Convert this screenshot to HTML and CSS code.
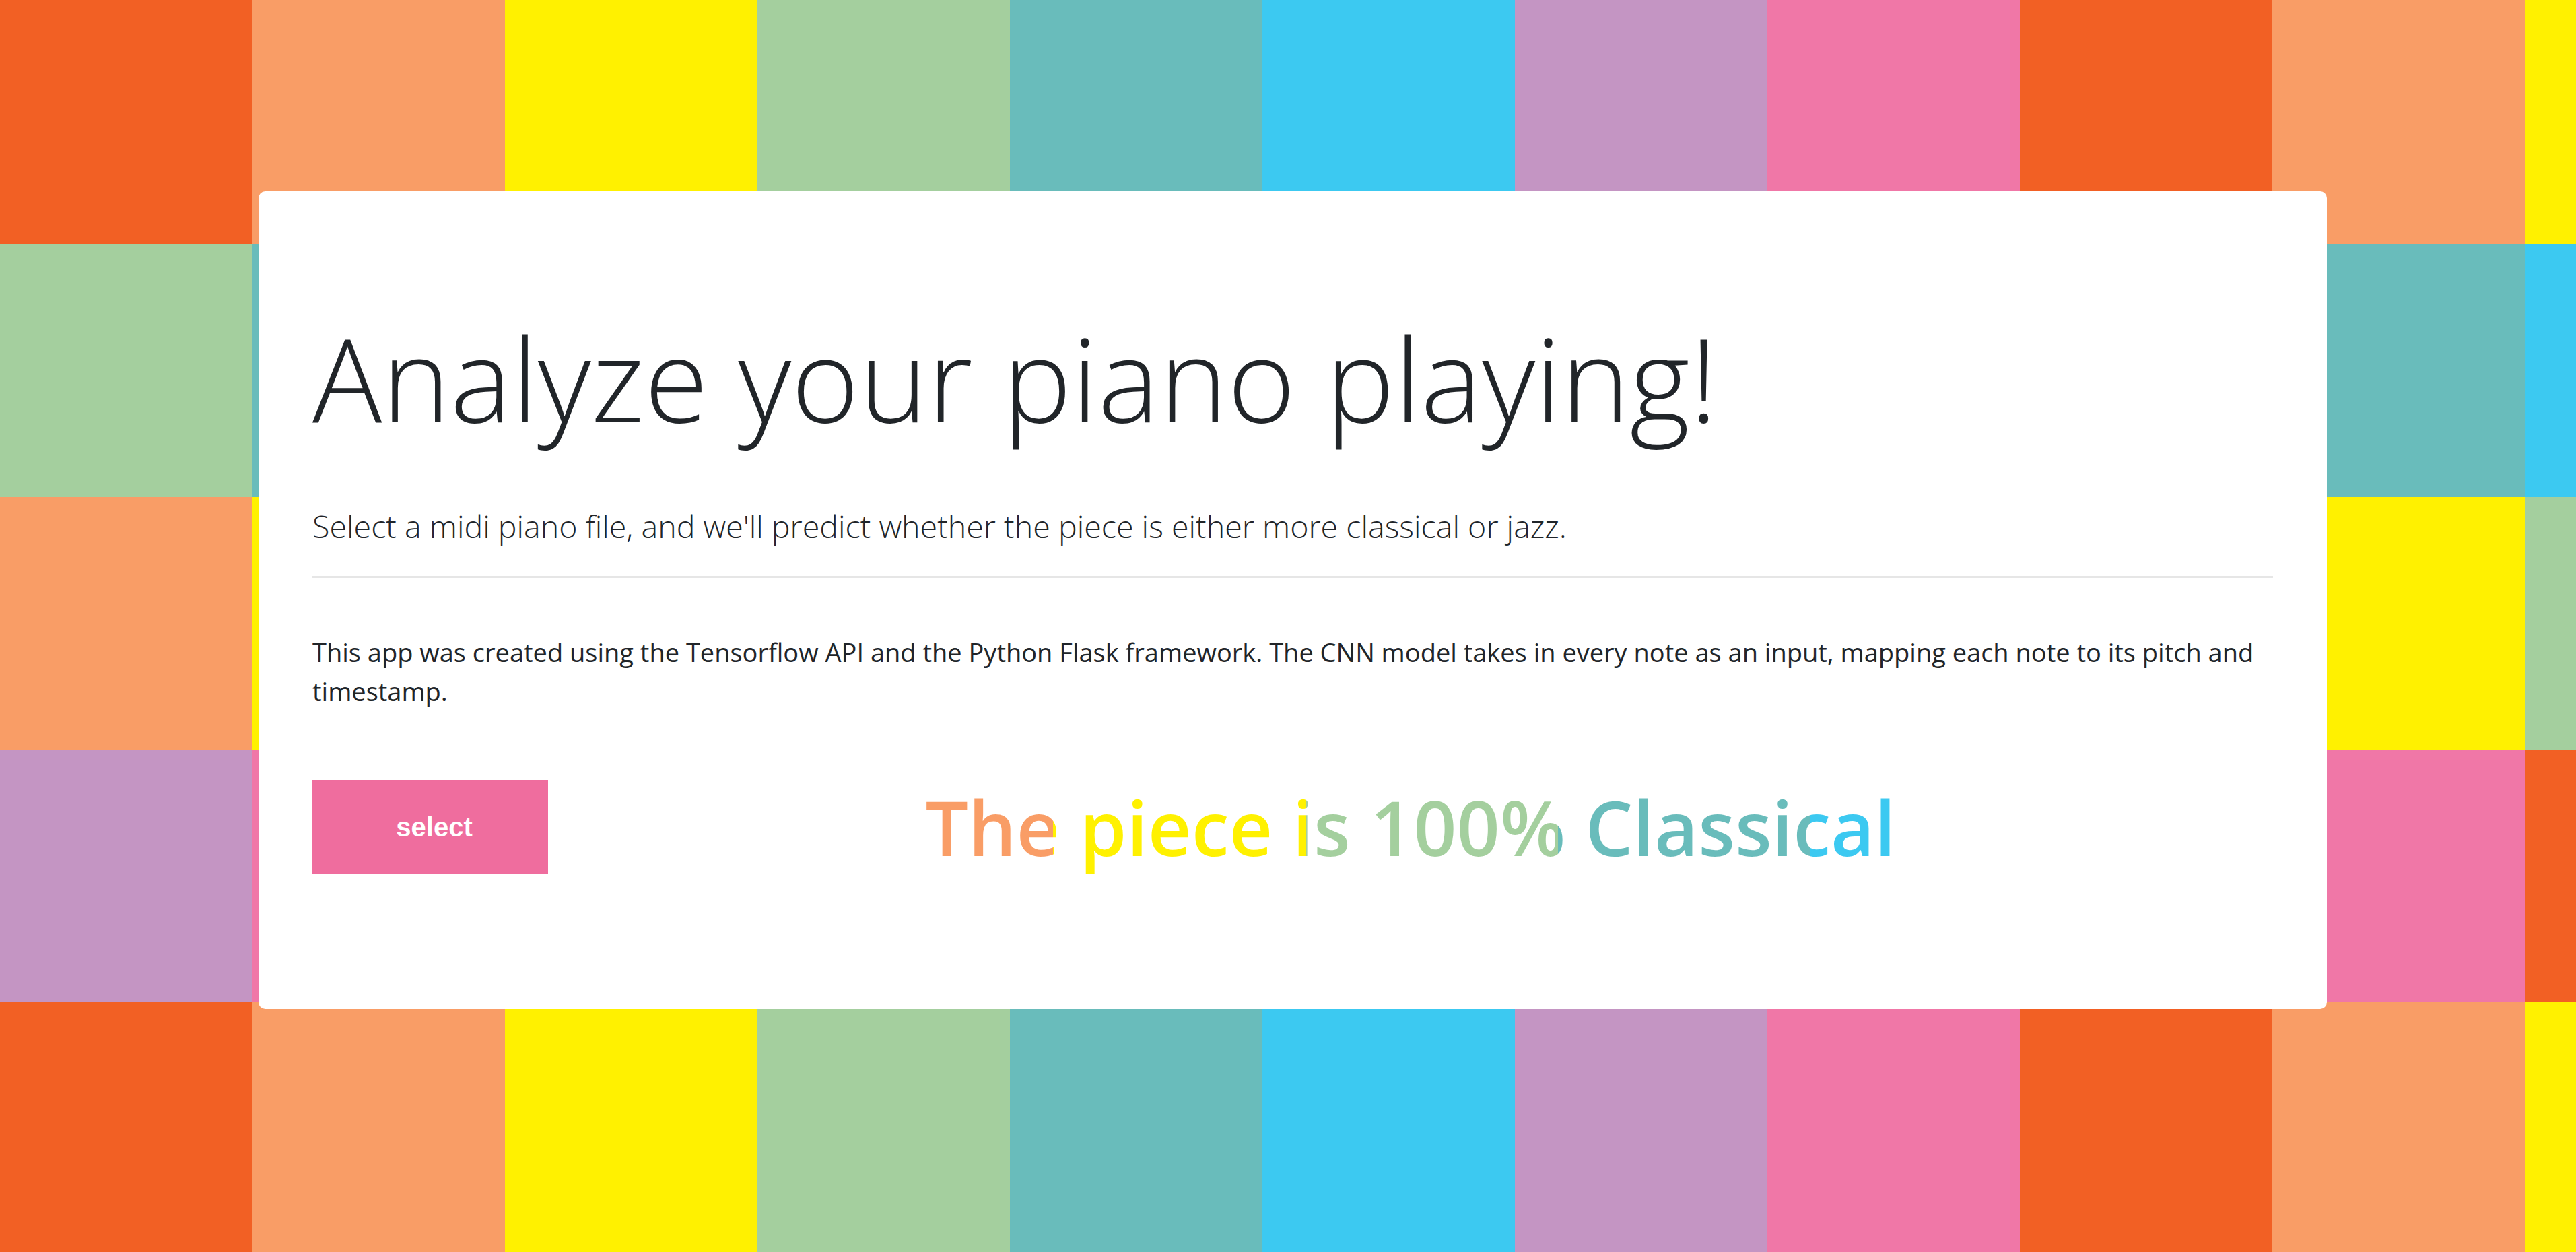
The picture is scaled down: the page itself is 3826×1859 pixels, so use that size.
FILE: index.html
```html
<!DOCTYPE html>
<html lang="en">
<head>
<meta charset="utf-8">
<title>Piano Analyzer</title>
<link rel="stylesheet" href="styles.css">
</head>
<body>
<div class="tiles" aria-hidden="true">
  <div class="t0"></div><div class="t1"></div><div class="t2"></div><div class="t3"></div><div class="t4"></div><div class="t5"></div><div class="t6"></div><div class="t7"></div><div class="t0"></div><div class="t1"></div><div class="t2"></div>
  <div class="t3"></div><div class="t4"></div><div class="t5"></div><div class="t6"></div><div class="t7"></div><div class="t0"></div><div class="t1"></div><div class="t2"></div><div class="t3"></div><div class="t4"></div><div class="t5"></div>
  <div class="t1"></div><div class="t2"></div><div class="t3"></div><div class="t4"></div><div class="t5"></div><div class="t6"></div><div class="t7"></div><div class="t0"></div><div class="t1"></div><div class="t2"></div><div class="t3"></div>
  <div class="t6"></div><div class="t7"></div><div class="t0"></div><div class="t1"></div><div class="t2"></div><div class="t3"></div><div class="t4"></div><div class="t5"></div><div class="t6"></div><div class="t7"></div><div class="t0"></div>
  <div class="t0"></div><div class="t1"></div><div class="t2"></div><div class="t3"></div><div class="t4"></div><div class="t5"></div><div class="t6"></div><div class="t7"></div><div class="t0"></div><div class="t1"></div><div class="t2"></div>
</div>

<main class="card">
  <h1 class="title">Analyze your piano playing!</h1>
  <p class="lead">Select a midi piano file, and we'll predict whether the piece is either more classical or jazz.</p>
  <hr class="rule">
  <p class="info">This app was created using the Tensorflow API and the Python Flask framework. The CNN model takes in every note as an input, mapping each note to its pitch and timestamp.</p>
  <div class="action-row">
    <button class="select-btn" type="button">select</button>
    <div class="result">The piece is 100% Classical</div>
  </div>
</main>
</body>
</html>
```

FILE: styles.css
```css
html, body {
  margin: 0;
  padding: 0;
}

body {
  width: 3826px;
  height: 1859px;
  overflow: hidden;
  font-family: "Open Sans", "Noto Sans", sans-serif;
  color: #212529;
}

.tiles {
  position: fixed;
  top: -12px;
  left: 0;
  z-index: -1;
  display: grid;
  grid-template-columns: repeat(11, 375px);
  grid-auto-rows: 375px;
}

.t0 { background: #f26024; }
.t1 { background: #f99d66; }
.t2 { background: #fff100; }
.t3 { background: #a4cf9e; }
.t4 { background: #69bcbb; }
.t5 { background: #3cc9f1; }
.t6 { background: #c495c3; }
.t7 { background: #f077a7; }

.card {
  box-sizing: border-box;
  width: 3072px;
  margin: 284px 0 0 384px;
  padding: 176px 80px 200px;
  background: #ffffff;
  border-radius: 10px;
}

.title {
  margin: 0;
  font-size: 172px;
  font-weight: 300;
  line-height: 200px;
  white-space: nowrap;
}

.lead {
  margin: 86px 0 0;
  font-size: 46.6px;
  font-weight: 300;
  line-height: 70px;
}

.rule {
  margin: 40px 0 0;
  height: 0;
  border: 0;
  border-top: 2px solid #e6e6e6;
}

.info {
  margin: 81px 0 0;
  font-size: 38px;
  font-weight: 400;
  line-height: 58px;
}

.action-row {
  display: flex;
  align-items: center;
  margin-top: 103px;
}

.select-btn {
  flex: 0 0 auto;
  box-sizing: border-box;
  width: 350px;
  height: 140px;
  padding: 0 0 0 12px;
  border: 0;
  border-radius: 0;
  background: #ef6d9e;
  color: #ffffff;
  font-family: "Liberation Sans", Arial, sans-serif;
  font-weight: 700;
  font-size: 40px;
  line-height: 46px;
}

.result {
  flex: 1 1 auto;
  text-align: center;
  font-size: 112.5px;
  font-weight: 600;
  line-height: 140px;
  color: transparent;
  background-image: linear-gradient(90deg,
    #f26024 0, #f26024 375px,
    #f99d66 375px, #f99d66 750px,
    #fff100 750px, #fff100 1125px,
    #a4cf9e 1125px, #a4cf9e 1500px,
    #69bcbb 1500px, #69bcbb 1875px,
    #3cc9f1 1875px, #3cc9f1 2250px,
    #c495c3 2250px, #c495c3 2625px,
    #f077a7 2625px, #f077a7 3000px);
  -webkit-background-clip: text;
  background-clip: text;
}
```
